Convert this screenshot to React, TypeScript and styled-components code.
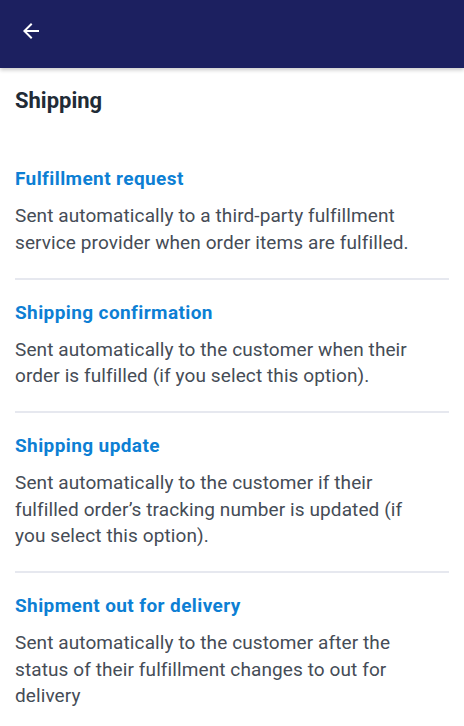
import React from "react";
import styled, { createGlobalStyle } from "styled-components";

const Global = createGlobalStyle`
  html, body { margin: 0; padding: 0; background: #ffffff; }
  body { font-family: Roboto, "Noto Sans", Arial, sans-serif; -webkit-font-smoothing: antialiased; }
  * { box-sizing: border-box; }
`;

const Page = styled.div`
  width: 464px;
  min-height: 726px;
  background: #ffffff;
  display: flex;
  flex-direction: column;
`;

const TopBar = styled.header`
  height: 68px;
  background: #1c2060;
  display: flex;
  align-items: center;
  padding: 0 0 0 18px;
  box-shadow: 0 2px 4px rgba(0, 0, 0, 0.22);
  position: relative;
  z-index: 1;
`;

const BackButton = styled.button`
  width: 26px;
  height: 26px;
  padding: 0;
  border: 0;
  background: transparent;
  display: flex;
  align-items: center;
  justify-content: center;
  margin-top: -6px;
`;

const Content = styled.main`
  padding: 0 15px;
  display: flex;
  flex-direction: column;
`;

const Title = styled.h1`
  margin: 0;
  padding: 19px 0 0;
  font-size: 22px;
  line-height: 28px;
  font-weight: 700;
  color: #212b36;
`;

const Section = styled.section<{ $first?: boolean; $last?: boolean }>`
  padding: ${(p) => (p.$first ? "52px" : "21px")} 0 21.5px;
  border-bottom: ${(p) => (p.$last ? "none" : "2px solid #e6e8ef")};
  display: flex;
  flex-direction: column;
  gap: 12px;
`;

const Heading = styled.h2`
  margin: 0;
  font-size: 19px;
  line-height: 24px;
  letter-spacing: 0.4px;
  font-weight: 700;
  color: #0d7fd4;
`;

const Body = styled.p`
  margin: 0;
  padding-right: 14px;
  font-size: 19px;
  line-height: 26.5px;
  letter-spacing: 0.1px;
  font-weight: 400;
  color: #454c56;
`;

const items = [
  {
    title: "Fulfillment request",
    body: "Sent automatically to a third-party fulfillment service provider when order items are fulfilled.",
  },
  {
    title: "Shipping confirmation",
    body: "Sent automatically to the customer when their order is fulfilled (if you select this option).",
  },
  {
    title: "Shipping update",
    body: "Sent automatically to the customer if their fulfilled order’s tracking number is updated (if you select this option).",
  },
  {
    title: "Shipment out for delivery",
    body: "Sent automatically to the customer after the status of their fulfillment changes to out for delivery",
  },
];

export default function App() {
  return (
    <Page>
      <Global />
      <TopBar>
        <BackButton aria-label="Back">
          <svg width="24" height="24" viewBox="0 0 24 24" fill="#ffffff">
            <path d="M20 11H7.83l5.59-5.59L12 4l-8 8 8 8 1.41-1.41L7.83 13H20v-2z" />
          </svg>
        </BackButton>
      </TopBar>
      <Content>
        <Title>Shipping</Title>
        {items.map((it, i) => (
          <Section key={it.title} $first={i === 0} $last={i === items.length - 1}>
            <Heading>{it.title}</Heading>
            <Body>{it.body}</Body>
          </Section>
        ))}
      </Content>
    </Page>
  );
}
